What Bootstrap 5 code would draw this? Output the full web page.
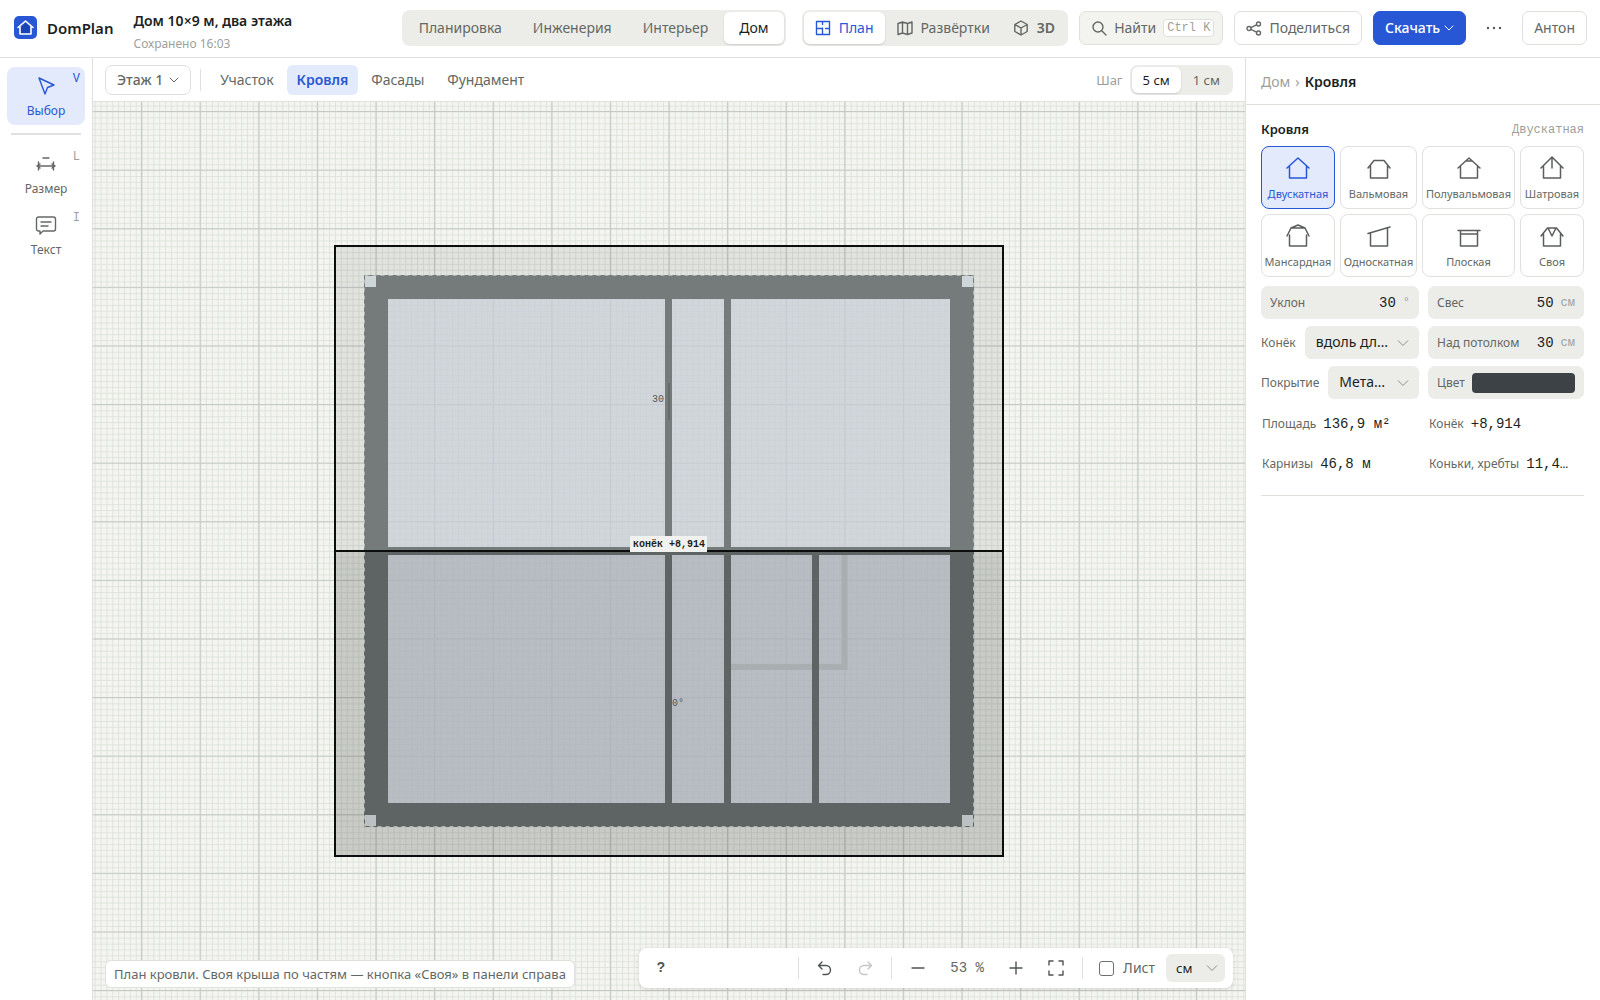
<!DOCTYPE html>
<html lang="ru">
<head>
<meta charset="utf-8">
<meta name="viewport" content="width=device-width, initial-scale=1">
<title>DomPlan — Дом 10×9 м, два этажа</title>
<link href="https://cdn.jsdelivr.net/npm/bootstrap@5.3.0/dist/css/bootstrap.min.css" rel="stylesheet">
<style>
:root{--ink:#1b1f1d;--soft:#636865;--faint:#9b9f9c;--edge:#dfe1dd;--fill:#ecede8;--blue:#2857d6;--tint:#e3eafb}
body{font-family:"Noto Sans","Open Sans",sans-serif;font-size:14px;line-height:20px;color:var(--soft);background:#fff}
button,select,input{font-family:inherit}
svg{display:block;flex:none}
.ico{width:16px;height:16px;fill:none;stroke:currentColor;stroke-width:1.4;stroke-linecap:round;stroke-linejoin:round}
.chev{width:10px;height:10px;stroke-width:1}
.mono{font-family:"Liberation Mono","DejaVu Sans Mono",monospace}
.topbar{height:58px;border-bottom:1px solid var(--edge);padding:0 13px 2px 14px}
.brand{font-size:15px;font-weight:600;color:var(--ink);gap:10px}
.doc{margin-left:20px;padding-top:11px}
.doc-name{font-size:14px;line-height:22px;font-weight:600;color:var(--ink)}
.doc-state{font-size:12px;line-height:24px;color:var(--faint)}
.seg{background:var(--fill);border-radius:8px;padding:2px;gap:1px}
.seg button{border:0;background:none;color:var(--soft);border-radius:6px;height:32px;padding:0 15px;display:flex;align-items:center;gap:8px}
.seg button.active{background:#fff;color:var(--ink);box-shadow:0 1px 2px #0002}
.seg.views{margin-left:16px}
.seg.views button{padding:0 11px}
.seg.views button.active{color:var(--blue)}
.seg.steps button{height:26px;padding:0 11px;font-size:13px}
.right-tools{gap:11px;margin-left:11px}
.ctl{height:34px;border:1px solid var(--edge);border-radius:7px;background:#fff;color:var(--soft);padding:0 11px;display:flex;align-items:center;gap:7px}
.ctl.find{background:#f3f4f0;padding-right:8px}
.ctl.find kbd{background:#fff;border:1px solid var(--edge);border-radius:4px;color:var(--faint);font-size:12px;line-height:16px;padding:0 3px}
.ctl.main{background:var(--blue);border-color:var(--blue);color:#fff;font-weight:500;gap:4px}
.ctl.plain{border-color:transparent;padding:0 8px}
.rail{width:93px;border-right:1px solid var(--edge);padding:9px 7px;flex:none}
.tool{position:relative;width:78px;height:58px;border:0;border-radius:8px;background:none;color:var(--soft);font-size:12px;line-height:16px;display:flex;flex-direction:column;align-items:center;gap:6px;padding:8px 0 0;margin-bottom:3px}
.tool .ico{width:22px;height:22px}
.tool.active{background:var(--tint);color:var(--blue)}
.tool .key{position:absolute;right:5px;top:4px;font-size:12px;color:var(--faint)}
.tool.active .key{color:var(--blue)}
.rule{height:1px;background:var(--edge)}
.rail .rule{margin:8px 4px 10px;height:2px}
.bar{height:44px;border-bottom:1px solid var(--edge);padding:1px 12px 0;gap:3px}
.bar .tab{border:0;background:none;height:30px;border-radius:6px;padding:0 10px;color:var(--soft)}
.bar .tab.active{background:var(--tint);color:var(--blue);font-weight:600}
.bar .vr-line{margin:0 6px}
.bar .step-name{color:var(--faint);font-size:13px;margin-right:4px}
.vr-line{width:1px;height:22px;background:var(--edge)}
.ctl.floor{height:30px;gap:6px;font-weight:500}
.stage{position:relative;background:#f4f5f0;overflow:hidden}
.stage>svg{position:absolute;inset:0;width:100%;height:100%}
.hint{position:absolute;left:12px;bottom:12px;height:28px;border:1px solid var(--edge);border-radius:6px;background:#fff;font-size:13px;line-height:26px;padding:0 8px}
.dock{position:absolute;right:12px;bottom:12px;height:40px;width:594px;border-radius:8px;background:#fff;box-shadow:0 1px 4px #0002;padding:0 8px 0 2px}
.dock button{width:40px;height:28px;border:0;background:none;padding:0;display:grid;place-items:center;color:#4f5552}
.dock button:disabled{color:#c3c6c3}
.dock .ico{width:18px;height:18px}
.dock .vr-line{margin:0 6px}
.dock .zoom{width:58px;text-align:center}
.dock label{gap:9px;padding-left:10px;margin-right:11px}
.pick{appearance:none;border:0;border-radius:6px;background:var(--fill) url("data:image/svg+xml,%3Csvg xmlns='http://www.w3.org/2000/svg' viewBox='0 0 12 12' fill='none' stroke='%23898d8a'%3E%3Cpath d='M1 3.5l5 5 5-5'/%3E%3C/svg%3E") no-repeat right 10px center/12px;color:var(--ink);padding:0 22px 0 11px}
.dock .pick{width:59px;height:28px;font-size:13px;padding:0 20px 0 10px;background-position:right 7px center}
.dock input{appearance:none;width:15px;height:15px;border:1px solid #6b706d;border-radius:3px;margin:0}
.side{width:355px;border-left:1px solid var(--edge);flex:none}
.crumbs{height:47px;border-bottom:1px solid var(--edge);padding:2px 15px 0;gap:5px;color:var(--faint)}
.crumbs a{color:var(--faint);text-decoration:none}
.crumbs strong,.head strong{color:var(--ink);font-weight:600}
.inner{padding:13px 16px 0 15px}
.head{font-size:13px;line-height:22px;margin-bottom:5px}
.head .mono{font-size:12px;color:var(--faint);padding-top:1px}
.roofs{display:grid;grid-template-columns:74fr 77fr 93fr 64fr;gap:5px}
.roofs button{height:63px;min-width:0;border:1px solid var(--edge);border-radius:8px;background:#fff;color:var(--soft);font-size:11px;line-height:16px;padding:9px 0 0;display:flex;flex-direction:column;align-items:center;gap:6px;white-space:nowrap}
.roofs svg{width:26px;height:24px;fill:none;stroke:#5a5f5c;stroke-width:1.5;stroke-linecap:round;stroke-linejoin:round}
.roofs button.active{background:var(--tint);border-color:var(--blue);color:var(--blue)}
.roofs button.active svg{stroke:var(--blue)}
.props{display:grid;grid-template-columns:158fr 156fr;gap:7px 9px;margin-top:9px;font-size:12px}
.props>*{min-width:0}
.cell{height:33px;background:var(--fill);border-radius:7px;padding:0 9px;display:flex;align-items:center;gap:7px}
.cell input[type=text]{flex:1;min-width:0;width:0;border:0;background:none;text-align:right;font-size:14px;color:var(--ink);padding:0}
.cell .unit{color:var(--faint)}
.cell input[type=color]{appearance:none;flex:1;min-width:0;height:20px;border:0;border-radius:4px;padding:0;background:none;overflow:hidden}
.cell input[type=color]::-webkit-color-swatch-wrapper{padding:0}
.cell input[type=color]::-webkit-color-swatch{border:0}
.line{height:33px;display:flex;align-items:center;gap:9px}
.line .pick{height:33px;flex:1;min-width:0;font-size:14px;padding-bottom:2px}
.stat{height:33px;display:flex;align-items:center;gap:7px;padding:3px 0 0 1px;white-space:nowrap}
.stat .mono{font-size:14px;color:var(--ink)}
</style>
</head>
<body class="vh-100 d-flex flex-column overflow-hidden">
<header class="topbar d-flex align-items-center">
  <div class="brand d-flex align-items-center">
    <svg width="23" height="23" viewBox="0 0 23 23"><rect width="23" height="23" rx="5" fill="#2857d6"/><path d="M7 11l4.500-4 4.500 4v6H7z" fill="#1b44b8"/><path d="M4 11.500 11.500 5l7.500 6.500M6 10.500v7.500h11v-7.500" fill="none" stroke="#fff" stroke-width="1.600" stroke-linecap="round" stroke-linejoin="round"/></svg>
    <span>DomPlan</span>
  </div>
  <div class="doc"><div class="doc-name">Дом 10×9 м, два этажа</div><div class="doc-state">Сохранено 16:03</div></div>
  <nav class="seg d-flex ms-auto" aria-label="Раздел"><button>Планировка</button><button>Инженерия</button><button>Интерьер</button><button class="active">Дом</button></nav>
  <div class="seg views d-flex">
    <button class="active"><svg class="ico" viewBox="0 0 16 16"><path d="M1.500 1.500h13v13h-4M7.500 14.500h-6v-13M1.500 8.500h6M7.500 1.500v3M7.500 8v6.500h3M14.500 8.500h-4"/></svg>План</button>
    <button><svg class="ico" viewBox="0 0 16 16"><path d="M1 3.500 5.500 2l5 1.500L15 2v11l-4.500 1.500-5-1.500L1 14.500zM5.500 2v11M10.500 3.500v11"/></svg>Развёртки</button>
    <button class="fw-semibold"><svg class="ico" viewBox="0 0 16 16"><path d="m8 1 6.200 3.500v7L8 15l-6.200-3.500v-7zM1.800 4.500 8 8l6.200-3.500M8 8v7"/></svg>3D</button>
  </div>
  <div class="right-tools d-flex align-items-center">
    <button class="ctl find"><svg class="ico" viewBox="0 0 16 16"><circle cx="7" cy="7" r="5"/><path d="m11 11 4 4"/></svg>Найти<kbd class="mono">Ctrl K</kbd></button>
    <button class="ctl"><svg class="ico" viewBox="0 0 16 16"><circle cx="3" cy="8.500" r="2"/><circle cx="12.500" cy="4" r="2"/><circle cx="12.500" cy="13" r="2"/><path d="m5 7.600 5.500-2.700M5 9.400l5.500 2.700"/></svg>Поделиться</button>
    <button class="ctl main">Скачать<svg class="ico chev" viewBox="0 0 10 10"><path d="m1 3 4 4 4-4"/></svg></button>
    <button class="ctl plain" aria-label="Ещё"><svg width="16" height="16" viewBox="0 0 16 16" fill="#555a57"><circle cx="2" cy="8" r="1.200"/><circle cx="8" cy="8" r="1.200"/><circle cx="14" cy="8" r="1.200"/></svg></button>
    <button class="ctl">Антон</button>
  </div>
</header>
<div class="d-flex flex-grow-1">
  <aside class="rail">
    <button class="tool active"><svg class="ico" viewBox="0 0 22 22"><path d="m4 3 15 7-6.500 2.500L10 19z"/></svg>Выбор<span class="key mono">V</span></button>
    <div class="rule"></div>
    <button class="tool"><svg class="ico" viewBox="0 0 22 22"><path d="M2 13h18M3.500 9v8M18.500 9v8M8 5h6M2 13l3-2M2 13l3 2M20 13l-3-2M20 13l-3 2"/></svg>Размер<span class="key mono">L</span></button>
    <button class="tool"><svg class="ico" viewBox="0 0 22 22"><path d="M3.500 3h15a2 2 0 0 1 2 2v10a2 2 0 0 1-2 2H8l-3 3v-3H3.500a2 2 0 0 1-2-2V5a2 2 0 0 1 2-2zM6 8h10M6 12h7"/></svg>Текст<span class="key mono">I</span></button>
  </aside>
  <main class="flex-grow-1 d-flex flex-column">
    <div class="bar d-flex align-items-center">
      <button class="ctl floor">Этаж 1<svg class="ico chev" viewBox="0 0 10 10"><path d="m1 3 4 4 4-4"/></svg></button>
      <div class="vr-line"></div>
      <button class="tab">Участок</button><button class="tab active">Кровля</button><button class="tab">Фасады</button><button class="tab">Фундамент</button>
      <span class="step-name ms-auto">Шаг</span>
      <div class="seg steps d-flex"><button class="active">5 см</button><button>1 см</button></div>
    </div>
    <div class="stage flex-grow-1">
      <svg viewBox="-576 -449 1152 898" preserveAspectRatio="xMidYMid slice" role="img" aria-label="План кровли">
        <defs>
          <pattern id="fine" width="5.86" height="5.86" patternUnits="userSpaceOnUse" y="-29.300"><path d="M0 0H5.860M0 0V5.860" stroke="#dadfd8" stroke-width="1.500"/></pattern>
          <pattern id="metre" width="58.600" height="58.600" patternUnits="userSpaceOnUse" x="-29.300"><path d="M0 29.300H58.600M29.300 0V58.600" stroke="#c6cac5" stroke-width="1.200"/></pattern>
        </defs>
        <rect x="-2000" y="-2000" width="4000" height="4000" fill="url(#fine)"/>
        <rect x="-2000" y="-2000" width="4000" height="4000" fill="url(#metre)"/>
        <rect x="-334" y="-305" width="668" height="305" fill="#3f4843" fill-opacity=".1"/>
        <rect x="-334" y="0" width="668" height="305" fill="#3f4843" fill-opacity=".24"/>
        <rect x="-281" y="-252" width="562" height="252" fill="#cbd1da" fill-opacity=".72"/>
        <rect x="-281" y="0" width="562" height="252" fill="#b4b9c1" fill-opacity=".78"/>
        <path d="M62 116h112M175.500 4v115" stroke="#a9aeb0" stroke-width="6" fill="none"/>
        <path d="M-305-276h610V0H281v-252h-562V0h-24zM-4-252h7V0h-7zM55-252h7V0h-7zM-281-4h562v4h-562z" fill="#757a7a"/>
        <path d="M-305 0h24v252h562V0h24v276h-610zM-4 0h7v252h-7zM55 0h7v252h-7zM143 0h7v252h-7zM-281 0h562v4h-562z" fill="#5e6464"/>
        <rect x="-304.500" y="-275.500" width="609" height="551" fill="none" stroke="#aeb2b0" stroke-dasharray="4 4"/>
        <path d="M-304-275h11v11h-11zM293-275h11v11h-11z" fill="#cfd6d9"/>
        <path d="M-304 264h11v11h-11zM293 264h11v11h-11z" fill="#bcc2c4"/>
        <g font-family="Liberation Mono, monospace" font-size="10" fill="#50565a"><text x="-17" y="-149">30°</text><text x="-3" y="155">30°</text></g>
        <path d="M-4-160h7v20h-7z" fill="#757a7a" fill-opacity=".9"/>
        <path d="M-4 140h7v20h-7z" fill="#5e6464" fill-opacity=".9"/>
        <path d="M0-168v37" stroke="#565c5d"/>
        <rect x="-334" y="-305" width="668" height="610" fill="none" stroke="#0c0e0d" stroke-width="2"/>
        <path d="M-334 0h668" stroke="#0c0e0d" stroke-width="2"/>
        <rect x="-39" y="-15" width="77" height="16" fill="#f1f2f0"/>
        <text x="0" y="-4" text-anchor="middle" font-family="Liberation Mono, monospace" font-size="10" font-weight="700" fill="#1b1f1d">конёк +8,914</text>
      </svg>
      <div class="hint">План кровли. Своя крыша по частям — кнопка «Своя» в панели справа</div>
      <div class="dock d-flex align-items-center">
        <button class="fw-bold mono" aria-label="Справка">?</button>
        <div class="vr-line ms-auto"></div>
        <button aria-label="Отменить"><svg class="ico" viewBox="0 0 18 18"><path d="M6 3 2.500 6.500 6 10M2.500 6.500H10a4.500 4.500 0 0 1 0 9H7"/></svg></button>
        <button disabled aria-label="Повторить"><svg class="ico" viewBox="0 0 18 18"><path d="m12 3 3.500 3.500L12 10M15.500 6.500H8a4.500 4.500 0 0 0 0 9h3"/></svg></button>
        <div class="vr-line"></div>
        <button aria-label="Мельче"><svg class="ico" viewBox="0 0 18 18"><path d="M3 9h12"/></svg></button>
        <span class="zoom mono">53 %</span>
        <button aria-label="Крупнее"><svg class="ico" viewBox="0 0 18 18"><path d="M3 9h12M9 3v12"/></svg></button>
        <button aria-label="Вписать"><svg class="ico" viewBox="0 0 18 18"><path d="M2 6V2h4M12 2h4v4M16 12v4h-4M6 16H2v-4"/></svg></button>
        <div class="vr-line"></div>
        <label class="d-flex align-items-center"><input type="checkbox">Лист</label>
        <select class="pick" aria-label="Единицы"><option>см</option></select>
      </div>
    </div>
  </main>
  <aside class="side">
    <nav class="crumbs d-flex align-items-center" aria-label="Путь"><a href="#">Дом</a><span>›</span><strong>Кровля</strong></nav>
    <div class="inner">
      <div class="head d-flex justify-content-between"><strong>Кровля</strong><span class="mono">Двускатная</span></div>
      <div class="roofs">
        <button class="active"><svg viewBox="0 0 26 24"><path d="M2 12 13 2l11 10M4.500 10v12h17V10"/></svg>Двускатная</button>
        <button><svg viewBox="0 0 26 24"><path d="m2 12 6-7.500h10l6 7.500M4.500 10v12h17V10"/></svg>Вальмовая</button>
        <button><svg viewBox="0 0 26 24"><path d="M2 12 13 2l11 10M9.500 5h7M4.500 10v12h17V10"/></svg>Полувальмовая</button>
        <button><svg viewBox="0 0 26 24"><path d="M2 12 13 1l11 11M13 1v11M4.500 10v12h17V10"/></svg>Шатровая</button>
        <button><svg viewBox="0 0 26 24"><path d="M2 12 6 4l7-3 7 3 4 8M6 4h14M4.500 11v11h17V11"/></svg>Мансардная</button>
        <button><svg viewBox="0 0 26 24"><path d="m2 9.500 22-6.500M4.500 9v13h17V4"/></svg>Односкатная</button>
        <button><svg viewBox="0 0 26 24"><path d="M2 6.500h22M4.500 6.500V22h17V6.500M4.500 10h17"/></svg>Плоская</button>
        <button><svg viewBox="0 0 26 24"><path d="m2 12 6.500-8h9l6.500 8M9 4l4 8 4-8M4.500 10v12h17V10"/></svg>Своя</button>
      </div>
      <div class="props">
        <label class="cell">Уклон<input class="mono" type="text" value="30"><span class="unit mono">°</span></label>
        <label class="cell">Свес<input class="mono" type="text" value="50"><span class="unit mono">см</span></label>
        <label class="line">Конёк<select class="pick"><option>вдоль дл…</option></select></label>
        <label class="cell">Над потолком<input class="mono" type="text" value="30"><span class="unit mono">см</span></label>
        <label class="line">Покрытие<select class="pick"><option>Мета…</option></select></label>
        <label class="cell">Цвет<input type="color" value="#3c4246"></label>
        <div class="stat">Площадь<span class="mono">136,9 м²</span></div>
        <div class="stat">Конёк<span class="mono">+8,914</span></div>
        <div class="stat">Карнизы<span class="mono">46,8 м</span></div>
        <div class="stat">Коньки, хребты<span class="mono">11,4…</span></div>
      </div>
      <div class="rule mt-3"></div>
    </div>
  </aside>
</div>
<script src="https://cdn.jsdelivr.net/npm/bootstrap@5.3.0/dist/js/bootstrap.bundle.min.js"></script>
</body>
</html>
